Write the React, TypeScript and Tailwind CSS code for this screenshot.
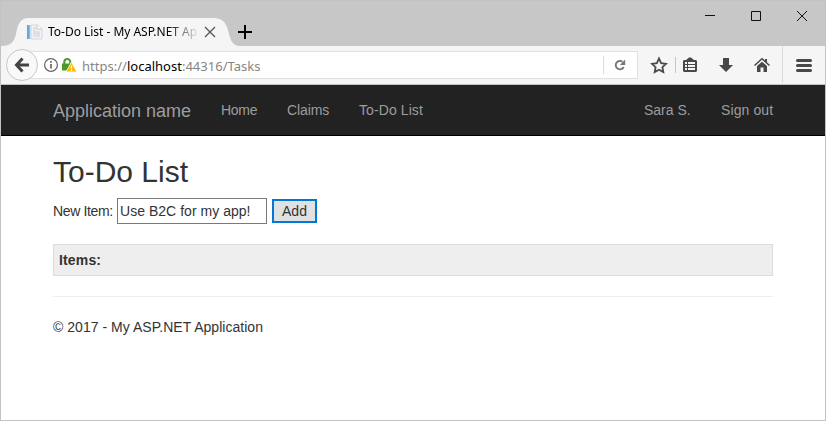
import React from 'react';

function TabBar() {
  return (
    <div className="relative flex h-[45px] bg-[#c7c7c7]">
      <svg className="absolute left-0 top-[17px]" width="240" height="28" viewBox="0 0 240 28">
        <path d="M0 28C10 28 13 24 15 16C17 6 19 0 28 0H212C222 0 225 5 227 12C229 21 231 28 239 28Z" fill="#f5f5f5" />
      </svg>
      <div className="relative mt-[17px] flex h-7 w-[230px] items-center pl-[25px]">
        <svg width="18" height="16" viewBox="0 0 18 16" className="shrink-0">
          <path d="M5 1H12L16 5V15H5Z" fill="#f1f3f5" stroke="#d3d8dd" />
          <path d="M11 1V5H16" fill="#fff" stroke="#c3c9cf" />
          <path d="M7 4H10M7 6H10M7 8H14M7 10H14M7 12H14" stroke="#cbd0d6" />
          <path d="M1 1H4V15H1Z" fill="#65a9d8" />
          <path d="M4 1V15" stroke="#b7d3e6" />
        </svg>
        <span className="ml-1 w-[150px] shrink-0 overflow-hidden whitespace-nowrap bg-gradient-to-r from-black from-76% to-[#e8e8e8] bg-clip-text font-['Noto_Sans',sans-serif] text-[12px] leading-5 tracking-[-0.02px] text-transparent">
          To-Do List - My ASP.NET Ap
        </span>
        <svg width="12" height="12" viewBox="0 0 12 12" className="ml-1.5 shrink-0" fill="none" stroke="#555" strokeWidth="1.3">
          <path d="M1 1L11 11M11 1L1 11" />
        </svg>
      </div>
      <svg width="14" height="14" viewBox="0 0 14 14" className="ml-[7px] mt-6" fill="none" stroke="#000" strokeWidth="2">
        <path d="M7 0V14M0 7H14" />
      </svg>
      <svg width="102" height="12" viewBox="0 0 102 12" className="ml-auto mr-[18px] mt-[9px]" fill="none" stroke="#111">
        <path d="M0 5.5H10M46.5 1.5H55.5V10.5H46.5Z" />
        <path d="M92 1L102 11M102 1L92 11" />
      </svg>
    </div>
  );
}

function Toolbar() {
  return (
    <div className="relative flex h-[39px] items-start border-b border-[#bfc4c2] bg-[#f5f5f5]">
      <div className="z-10 ml-[5px] mt-[3px] flex size-8 shrink-0 items-center justify-center rounded-full border border-[#c8c8c8] bg-[#f9f9f9]">
        <svg width="16" height="16" viewBox="0 0 16 16" fill="none" stroke="#444" strokeWidth="3">
          <path d="M8.5 1.5L2.5 8L8.5 14.5M2.5 8H15" />
        </svg>
      </div>
      <div className="-ml-3.5 mt-[5px] flex h-7 w-[614px] shrink-0 items-center border border-[#e1e1e1] bg-white pl-[19px]">
        <svg width="14" height="14" viewBox="0 0 14 14" className="shrink-0" fill="none" stroke="#666">
          <circle cx="7" cy="7" r="6.4" strokeWidth="1.2" />
          <path d="M7 6V10.5M7 3V4.8" strokeWidth="1.7" />
        </svg>
        <svg width="15" height="15" viewBox="0 0 15 15" className="ml-[4px] shrink-0">
          <path d="M2.3 6V4A3 3 0 0 1 8.3 4V6" fill="none" stroke="#4a9a29" strokeWidth="2" />
          <path d="M0 5.5H9.5V12.5H0Z" fill="#4a9a29" />
          <path d="M9.5 4L15 14H4Z" fill="#ffb900" stroke="#fff" strokeWidth=".8" />
          <path d="M9.5 7.5V10.5M9.5 11.5V13" stroke="#fff" strokeWidth="1.3" />
        </svg>
        <span className="ml-[5px] mt-0.5 whitespace-nowrap font-['Noto_Sans',sans-serif] text-[13px] leading-5 tracking-[0.01px] text-[#858585]">
          https://<span className="text-black">localhost</span>:44316/Tasks
        </span>
        <div className="ml-auto flex h-[18px] w-[34px] items-center border-l border-[#dcdcdc] pl-[10px]">
          <svg width="12" height="12" viewBox="0 0 12 12" fill="none">
            <path d="M8.5 2.8A4.2 4.2 0 1 0 9.7 8" stroke="#777" strokeWidth="1.9" />
            <path d="M11.2 .5V6H5.8Z" fill="#777" />
          </svg>
        </div>
      </div>
      <svg width="187" height="38" viewBox="0 0 187 38" className="shrink-0">
        <path d="M21 12.5L23.1 17.1L28 17.8L24.4 21.2L25.3 26L21 23.7L16.7 26L17.6 21.2L14 17.8L18.9 17.1Z" fill="none" stroke="#484848" strokeWidth="1.8" />
        <path d="M37.5 11V27" stroke="#c5c5c5" />
        <path d="M46 14H48L51 11.5H53L56 14H58L59 15V25L58 26H46L45 25V15Z" fill="#484848" />
        <path d="M47 16H49V18H47ZM50 16H57V18H50ZM47 19H49V21H47ZM50 19H57V21H50ZM47 22H49V24H47ZM50 22H57V24H50Z" fill="#f5f5f5" />
        <path d="M85 12H91V19H95L88 26L81 19H85Z" fill="#484848" />
        <path d="M116.5 19.5L124 12.8L131.5 19.5" fill="none" stroke="#484848" strokeWidth="1.5" />
        <path d="M127 13H129V17L127 15Z" fill="#484848" />
        <path d="M119 20L124 15.8L129 20V26H125.5V21.5H122.5V26H119Z" fill="#484848" />
        <path d="M144.5 0V37" stroke="#dcdcdc" />
        <path d="M159.5 14.5H172.5M159.5 19.5H172.5M159.5 24.5H172.5" stroke="#484848" strokeWidth="3" strokeLinecap="round" />
      </svg>
    </div>
  );
}

function NavBar() {
  return (
    <nav className="flex h-[51px] items-center justify-between border-b border-black bg-[#222] px-[52px] text-sm text-[#9d9d9d]">
      <div className="flex items-center">
        <a className="mt-0.5 w-[168px] text-lg leading-5">Application name</a>
        <a className="w-[66px] tracking-[-0.3px]">Home</a>
        <a className="w-[72px] tracking-[-0.1px]">Claims</a>
        <a className="tracking-[0.09px]">To-Do List</a>
      </div>
      <div className="flex">
        <a className="w-[77px]">Sara S.</a>
        <a className="w-[52px] whitespace-nowrap tracking-[0.1px]">Sign out</a>
      </div>
    </nav>
  );
}

export default function App() {
  return (
    <div className="h-[421px] w-[826px] overflow-hidden border border-[#c3c3c3] bg-white font-['Liberation_Sans',Arial,sans-serif]">
      <TabBar />
      <Toolbar />
      <NavBar />
      <main className="px-[52px] pt-[19px] text-sm text-[#333]">
        <h2 className="text-[30px] font-normal leading-[33px]">To-Do List</h2>
        <div className="mt-2.5 flex h-[26px] items-center">
          <label htmlFor="item" className="w-16 shrink-0 whitespace-nowrap tracking-[-0.35px]">New Item:</label>
          <input id="item" defaultValue="Use B2C for my app!" className="h-[26px] w-[150px] border border-[#7a7a7a] bg-white px-0.5 tracking-[0.03px] outline-none" />
          <button className="ml-[5px] h-6 w-[45px] border-2 border-[#0078d7] bg-[#e1e1e1] leading-5">Add</button>
        </div>
        <table className="mt-5 h-8 w-full border-collapse border border-[#ddd] bg-[#eee]">
          <tbody>
            <tr>
              <th className="px-[5px] py-0 text-left tracking-[0.15px]">Items:</th>
            </tr>
          </tbody>
        </table>
        <hr className="mt-5 border-[#eee]" />
        <footer className="mt-5 leading-5 tracking-[0.03px]">© 2017 - My ASP.NET Application</footer>
      </main>
    </div>
  );
}
